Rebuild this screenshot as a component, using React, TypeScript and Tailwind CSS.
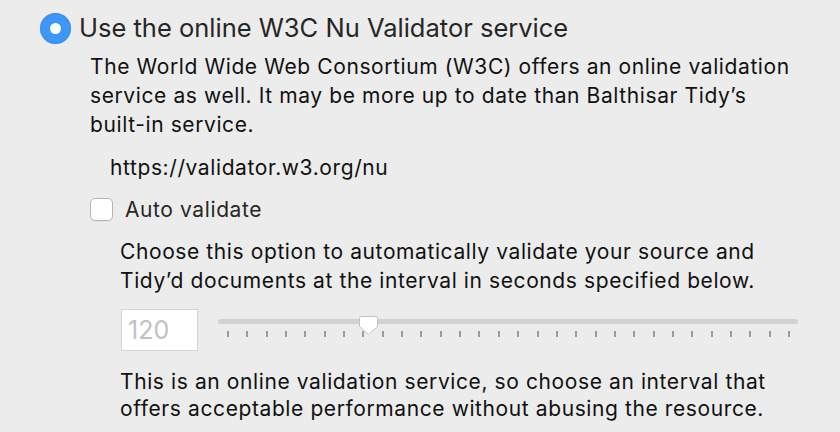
const TICKS = Array.from({ length: 30 }, (_, i) => i);

function RadioOn() {
  return (
    <span className="flex h-[31px] w-[31px] shrink-0 items-center justify-center rounded-full bg-[#3d97f7] shadow-[inset_0_0_0_1px_rgba(40,120,230,0.4)]">
      <span className="h-[11px] w-[11px] rounded-full bg-white" />
    </span>
  );
}

function Slider() {
  return (
    <div className="relative h-[42px] w-[580px]">
      <div className="absolute left-0 right-0 top-[12px] h-[5px] rounded-full bg-[#d2d2d2]" />
      <div className="absolute left-[9px] right-[8px] top-[24px] flex justify-between">
        {TICKS.map((t) => (
          <span key={t} className="h-[6px] w-[2px] bg-[#9c9c9c]" />
        ))}
      </div>
      <svg className="absolute left-[140px] top-[8px]" width="21" height="21" viewBox="0 0 21 21">
        <path
          d="M3.5 1.5 H17.5 Q19.5 1.5 19.5 3.5 V11.5 L10.5 19.5 L1.5 11.5 V3.5 Q1.5 1.5 3.5 1.5 Z"
          fill="#ffffff"
          stroke="#c4c4c4"
          strokeWidth="1"
        />
      </svg>
    </div>
  );
}

export default function App() {
  return (
    <div className="h-[432px] w-[840px] overflow-hidden bg-[#ececec] font-['Inter','Liberation_Sans',sans-serif] text-[#111]">
      <div className="flex items-center gap-[8px] pl-[40px] pt-[11px]">
        <RadioOn />
        <span className="text-[25.5px] leading-[34px] text-[#262626]">Use the online W3C Nu Validator service</span>
      </div>

      <div className="pl-[90px] pt-[7px] text-[21px] leading-[29px] tracking-[0.6px]">
        <p className="whitespace-nowrap">
          The World Wide Web Consortium (W3C) offers an online validation
          <br />
          service as well. It may be more up to date than Balthisar Tidy’s
          <br />
          built-in service.
        </p>

        <p className="pl-[20px] pt-[14px]">https://validator.w3.org/nu</p>

        <label className="mt-[13px] flex items-center gap-[12px]">
          <span className="h-[23px] w-[23px] rounded-[5px] border border-[#b5b5b5] bg-white shadow-[0_1px_0_rgba(0,0,0,0.04)]" />
          <span className="text-[#262626]">Auto validate</span>
        </label>

        <div className="pl-[30px] pt-[13px]">
          <p className="whitespace-nowrap">
            Choose this option to automatically validate your source and
            <br />
            Tidy’d documents at the interval in seconds specified below.
          </p>

          <div className="mt-[14px] flex items-start gap-[20px] pl-[1px] tracking-normal">
            <div className="flex h-[42px] w-[77px] items-center border border-[#d4d4d4] bg-white pl-[6px] text-[25px] text-[#c2c2c2]">
              120
            </div>
            <div className="-mt-[2px]">
              <Slider />
            </div>
          </div>

          <p className="whitespace-nowrap pt-[17px] leading-[27px]">
            This is an online validation service, so choose an interval that
            <br />
            offers acceptable performance without abusing the resource.
          </p>
        </div>
      </div>
    </div>
  );
}
